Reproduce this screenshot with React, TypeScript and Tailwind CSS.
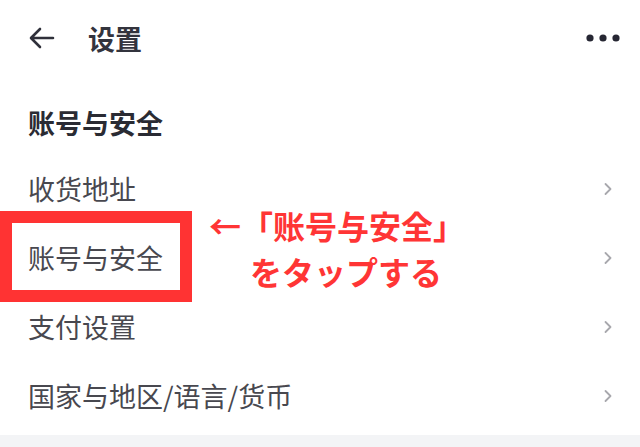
import React from "react";

const font = { fontFamily: '"Noto Sans CJK SC", "Noto Sans", sans-serif' };

function Chevron() {
  return (
    <svg width="10" height="14" viewBox="0 0 10 14" className="shrink-0">
      <path d="M2.5 2 L7.5 7 L2.5 12" fill="none" stroke="#a8a8ad" strokeWidth="1.8" strokeLinecap="round" strokeLinejoin="round" />
    </svg>
  );
}

function Row({ label }: { label: string }) {
  return (
    <div className="h-[69px] flex items-center justify-between pl-[28px] pr-[27px]">
      <span className="text-[27px] leading-none text-[#48484f]">{label}</span>
      <Chevron />
    </div>
  );
}

export default function App() {
  return (
    <div className="relative w-[640px] h-[447px] bg-white overflow-hidden flex flex-col" style={font}>
      <div className="h-[76px] flex items-center justify-between pl-[28px] pr-[20px] shrink-0">
        <div className="flex items-center">
          <svg width="28" height="24" viewBox="0 0 28 24">
            <path d="M25 12 H4 M12 3 L3 12 L12 21" fill="none" stroke="#2f303a" strokeWidth="2.6" strokeLinecap="round" strokeLinejoin="round" />
          </svg>
          <span className="ml-[32px] text-[27px] leading-none font-bold text-[#33343d]">设置</span>
        </div>
        <svg width="34" height="8" viewBox="0 0 34 8">
          <circle cx="4" cy="4" r="3.6" fill="#262733" />
          <circle cx="17" cy="4" r="3.6" fill="#262733" />
          <circle cx="30" cy="4" r="3.6" fill="#262733" />
        </svg>
      </div>
      <div className="h-[78px] pt-[14px] flex items-center pl-[28px] shrink-0">
        <span className="text-[27px] leading-none font-bold text-[#2a2b33]">账号与安全</span>
      </div>
      <Row label="收货地址" />
      <Row label="账号与安全" />
      <Row label="支付设置" />
      <Row label="国家与地区/语言/货币" />
      <div className="h-[5px] shrink-0" />
      <div className="flex-1 bg-[#f3f4f6]" />

      <div className="absolute left-0 top-[211px] w-[192px] h-[91px] border-[12px] border-[#ff3333]" />
      <div
        className="absolute left-[209px] top-[207px] text-[32px] leading-[36px] font-bold text-[#ff3535] whitespace-nowrap"
        style={{ fontFamily: '"Noto Sans CJK JP", sans-serif' }}
      >
        ←「账号与安全」
      </div>
      <div
        className="absolute left-[250px] top-[253px] text-[32px] leading-[36px] font-bold text-[#ff3535] whitespace-nowrap"
        style={{ fontFamily: '"Noto Sans CJK JP", sans-serif' }}
      >
        をタップする
      </div>
    </div>
  );
}
